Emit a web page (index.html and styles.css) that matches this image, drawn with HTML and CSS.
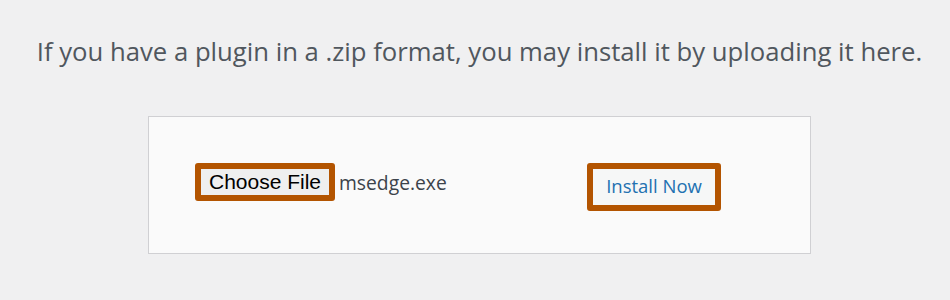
FILE: index.html
```html
<!DOCTYPE html>
<html>
<head>
<meta charset="utf-8">
<link rel="stylesheet" href="styles.css">
</head>
<body>
<p class="intro">If you have a plugin in a .zip format, you may install it by uploading it here.</p>
<form class="upload-box">
  <div class="file-group">
    <span class="hl hl-file"><span class="file-btn">Choose File</span></span>
    <span class="file-name">msedge.exe</span>
  </div>
  <span class="hl hl-install"><span class="install-btn">Install Now</span></span>
</form>
</body>
</html>
```

FILE: styles.css
```css
html, body {
  margin: 0;
  padding: 0;
  background: #f0f0f1;
  width: 950px;
  height: 300px;
  overflow: hidden;
}
.intro {
  margin: 0;
  padding-top: 34px;
  text-align: center;
  font-family: "Open Sans", "Noto Sans", sans-serif;
  font-size: 25.7px;
  line-height: 36px;
  color: #50575e;
  padding-left: 9px;
  white-space: nowrap;
}
.upload-box {
  box-sizing: border-box;
  margin: 46px 0 0 148px;
  width: 663px;
  height: 138px;
  border: 1px solid #d0d0d3;
  background: #fafafa;
  display: flex;
  align-items: flex-start;
  padding: 46px 0 0 46px;
}
.file-group {
  width: 392px;
  display: flex;
  align-items: center;
}
.hl {
  display: inline-flex;
  border: 6px solid #b35400;
  border-radius: 3px;
  box-sizing: border-box;
}
.hl-file {
  width: 140px;
  height: 38px;
}
.file-btn {
  flex: 1;
  background: #efefef;
  color: #000;
  font-family: "Liberation Sans", Arial, sans-serif;
  font-size: 21px;
  display: flex;
  align-items: center;
  justify-content: center;
}
.file-name {
  margin-left: 4px;
  font-family: "Open Sans", "Noto Sans", sans-serif;
  font-size: 19.3px;
  color: #3c434a;
}
.hl-install {
  width: 134px;
  height: 48px;
}
.install-btn {
  flex: 1;
  background: #f6f7f7;
  color: #2271b1;
  font-family: "Open Sans", "Noto Sans", sans-serif;
  font-size: 18.5px;
  padding-bottom: 3px;
  display: flex;
  align-items: center;
  justify-content: center;
}
```
